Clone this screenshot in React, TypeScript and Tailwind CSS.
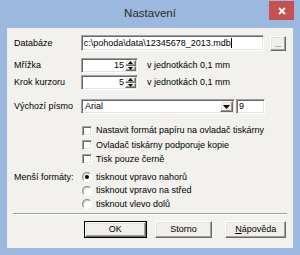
import React from 'react';

const sunken =
  'border border-t-[#a0a0a0] border-l-[#a0a0a0] border-b-white border-r-white shadow-[inset_1px_1px_0_#696969,inset_-1px_-1px_0_#e3e3e3] bg-white';
const raised =
  'border border-t-white border-l-white border-b-[#696969] border-r-[#696969] shadow-[inset_-1px_-1px_0_#a0a0a0,inset_1px_1px_0_#e3e3e3] bg-[#f0efec]';

function Arrow({ up }: { up?: boolean }) {
  return (
    <svg width="5" height="3" viewBox="0 0 5 3">
      <polygon points={up ? '2.5,0 5,3 0,3' : '0,0 5,0 2.5,3'} fill="#000" />
    </svg>
  );
}

function Spinner({ value }: { value: string }) {
  return (
    <div className={`w-[57px] h-[15px] flex items-stretch ${sunken} p-[1px]`}>
      <span className="flex-1 text-right pr-[1px] leading-[11px]">{value}</span>
      <div className="w-[11px] flex flex-col">
        <div className={`flex-1 flex items-center justify-center ${raised}`}>
          <Arrow up />
        </div>
        <div className={`flex-1 flex items-center justify-center ${raised}`}>
          <Arrow />
        </div>
      </div>
    </div>
  );
}

function Check({ label }: { label: string }) {
  return (
    <div className="flex items-center h-full">
      <span className={`w-[10px] h-[10px] ${sunken}`} />
      <span className="ml-[4px]">{label}</span>
    </div>
  );
}

function Radio({ label, checked }: { label: string; checked?: boolean }) {
  return (
    <div className="flex items-center h-full">
      <span className="w-[10px] h-[10px] rounded-full bg-white border border-t-[#8a8a8a] border-l-[#8a8a8a] border-b-white border-r-white shadow-[inset_1px_1px_0_#c8c8c8] flex items-center justify-center">
        {checked && <span className="w-[4px] h-[4px] rounded-full bg-black" />}
      </span>
      <span className="ml-[4px]">{label}</span>
    </div>
  );
}

export default function App() {
  return (
    <div className="w-[300px] h-[255px] bg-[#9cb8df] flex flex-col font-['Liberation_Sans',Arial,sans-serif] text-[9px] text-black leading-none">
      {/* Title bar */}
      <div className="h-[28px] relative flex items-center justify-center">
        <span className="text-[11.5px] text-[#2b2b2b]">Nastavení</span>
        <div className="absolute right-[6px] top-[1px] w-[25px] h-[19px] bg-[#c75050] flex items-center justify-center">
          <svg width="8" height="8" viewBox="0 0 8 8">
            <path d="M1 1L7 7M7 1L1 7" stroke="#fff" strokeWidth="1.8" />
          </svg>
        </div>
      </div>

      {/* Client area */}
      <div className="mx-[7px] mb-[7px] flex-1 bg-[#f2f1ee] px-[7px] pt-[7px] flex flex-col">
        <div className="flex items-center h-[16px]">
          <span className="w-[67px]">Databáze</span>
          <div className={`w-[184px] h-[16px] ${sunken} flex items-center pl-[2px]`}>
            <span>c:\pohoda\data\12345678_2013.mdb</span>
            <span className="w-[1px] h-[10px] bg-black" />
          </div>
          <div className={`ml-[6px] w-[16px] h-[15px] ${raised} flex items-end justify-center pb-[2px]`}>
            <span className="text-[7px] leading-none">...</span>
          </div>
        </div>

        <div className="flex items-center h-[15px] mt-[7px]">
          <span className="w-[67px]">Mřížka</span>
          <Spinner value="15" />
          <span className="ml-[9px]">v jednotkách 0,1 mm</span>
        </div>
        <div className="flex items-center h-[15px] mt-[2px]">
          <span className="w-[67px]">Krok kurzoru</span>
          <Spinner value="5" />
          <span className="ml-[9px]">v jednotkách 0,1 mm</span>
        </div>

        <div className="flex items-center h-[15px] mt-[9px]">
          <span className="w-[67px]">Výchozí písmo</span>
          <div className={`w-[154px] h-[15px] ${sunken} flex items-stretch p-[1px]`}>
            <span className="flex-1 pl-[2px] flex items-center">Arial</span>
            <div className={`w-[13px] ${raised} flex items-center justify-center`}>
              <svg width="7" height="4" viewBox="0 0 7 4">
                <polygon points="0,0 7,0 3.5,4" fill="#000" />
              </svg>
            </div>
          </div>
          <div className={`ml-[1px] w-[29px] h-[15px] ${sunken} flex items-center pl-[2px]`}>9</div>
        </div>

        <div className="flex flex-col pl-[68px] mt-[9px]">
          <div className="h-[15px]">
            <Check label="Nastavit formát papíru na ovladač tiskárny" />
          </div>
          <div className="h-[14px]">
            <Check label="Ovladač tiskárny podporuje kopie" />
          </div>
          <div className="h-[14px]">
            <Check label="Tisk pouze černě" />
          </div>
        </div>

        <div className="flex mt-[4px]">
          <span className="w-[68px] h-[14px] flex items-center">Menší formáty:</span>
          <div className="flex flex-col">
            <div className="h-[14px]">
              <Radio label="tisknout vpravo nahorů" checked />
            </div>
            <div className="h-[13px]">
              <Radio label="tisknout vpravo na střed" />
            </div>
            <div className="h-[14px]">
              <Radio label="tisknout vlevo dolů" />
            </div>
          </div>
        </div>

        <div className="mt-[2px] ml-[-1px] w-[274px] h-[2px] border-t border-t-[#a0a0a0] border-b border-b-white" />

        <div className="flex mt-[6px] ml-[70px]">
          <div className="w-[63px] h-[17px] border border-black">
            <div className={`w-full h-full ${raised} flex items-center justify-center`}>OK</div>
          </div>
          <div className={`ml-[8px] w-[58px] h-[17px] ${raised} flex items-center justify-center`}>Storno</div>
          <div className={`ml-[13px] w-[61px] h-[17px] ${raised} flex items-center justify-center`}>
            <span>
              <span className="underline">N</span>ápověda
            </span>
          </div>
        </div>
      </div>
    </div>
  );
}
